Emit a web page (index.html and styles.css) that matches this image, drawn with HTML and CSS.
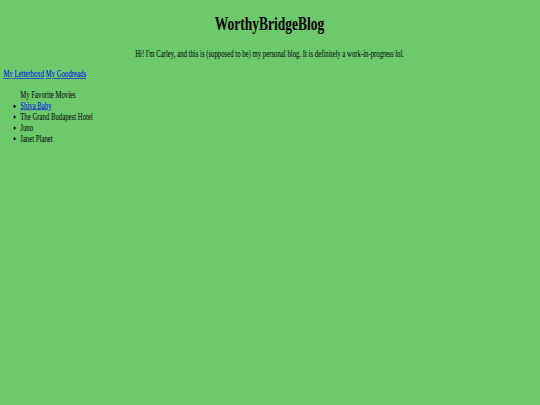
FILE: index.html
```html
<!DOCTYPE html>
<html>
<head>
<meta charset="utf-8">
<title>WorthyBridgeBlog</title>
<link rel="stylesheet" href="styles.css">
</head>
<body>
<div class="frame">
<div class="page">
  <h1 class="title">WorthyBridgeBlog</h1>
  <p class="intro">Hi! I'm Carley, and this is (supposed to be) my personal blog. It is definitely a work-in-progress lol.</p>
  <p class="links"><a href="#">My Letterboxd</a> <a href="#">My Goodreads</a></p>
  <ul class="movies">
    <li class="heading">My Favorite Movies</li>
    <li><a href="#">Shiva Baby</a></li>
    <li>The Grand Budapest Hotel</li>
    <li>Juno</li>
    <li>Janet Planet</li>
  </ul>
</div>
</div>
</body>
</html>
```
FILE: styles.css
```css
html, body {
  margin: 0;
  padding: 0;
  background: #6cc96c;
}
.frame {
  width: 540px;
  height: 405px;
  overflow: hidden;
}
.page {
  display: flow-root;
  width: 1278px;
  padding: 0 8px;
  box-sizing: border-box;
  transform: scale(0.421875, 0.605);
  transform-origin: 0 0;
  font-family: "Liberation Serif", "Times New Roman", serif;
  font-size: 16px;
  color: #000;
}
.title {
  text-align: center;
  font-size: 32px;
  font-weight: bold;
  margin: 21.44px 0;
}
.intro {
  text-align: center;
  margin: 16px 0;
}
.links {
  margin: 16px 0;
}
.links a, .movies a {
  color: #0000ee;
}
.movies {
  margin: 16px 0;
  padding-left: 40px;
}
.movies .heading {
  list-style: none;
}
```
